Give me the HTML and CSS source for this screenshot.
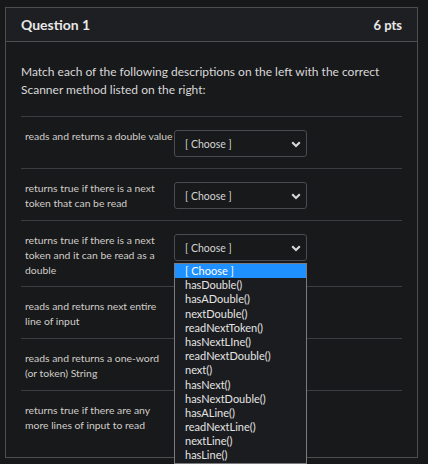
FILE: index.html
```html
<!DOCTYPE html>
<html lang="en">
<head>
    <meta charset="UTF-8">
    <title>Question 1</title>
    <link rel="stylesheet" href="styles.css">
</head>
<body>
    <div class="question">
        <div class="question-header">
            <span class="question-title">Question 1</span>
            <span class="question-points">6 pts</span>
        </div>

        <div class="question-body">
            <p class="question-text">Match each of the following descriptions on the left with the correct Scanner method listed on the right:</p>

            <div class="match-row">
                <div class="match-label nowrap">reads and returns a double value</div>
                <div class="match-select">
                    <div class="select-box">[ Choose ]<svg class="chevron" width="10" height="7" viewBox="0 0 10 7"><path d="M1.2 1.3 L5 5 L8.8 1.3" fill="none" stroke="#d6d6d6" stroke-width="2.2"/></svg></div>
                </div>
            </div>

            <div class="match-row">
                <div class="match-label">returns true if there is a next token that can be read</div>
                <div class="match-select">
                    <div class="select-box">[ Choose ]<svg class="chevron" width="10" height="7" viewBox="0 0 10 7"><path d="M1.2 1.3 L5 5 L8.8 1.3" fill="none" stroke="#d6d6d6" stroke-width="2.2"/></svg></div>
                </div>
            </div>

            <div class="match-row">
                <div class="match-label">returns true if there is a next token and it can be read as a double</div>
                <div class="match-select">
                    <div class="select-box">[ Choose ]<svg class="chevron" width="10" height="7" viewBox="0 0 10 7"><path d="M1.2 1.3 L5 5 L8.8 1.3" fill="none" stroke="#d6d6d6" stroke-width="2.2"/></svg></div>

                    <!-- open dropdown list -->
                    <div class="select-list">
                        <div class="select-option selected">[ Choose ]</div>
                        <div class="select-option">hasDouble()</div>
                        <div class="select-option">hasADouble()</div>
                        <div class="select-option">nextDouble()</div>
                        <div class="select-option">readNextToken()</div>
                        <div class="select-option">hasNextLIne()</div>
                        <div class="select-option">readNextDouble()</div>
                        <div class="select-option">next()</div>
                        <div class="select-option">hasNext()</div>
                        <div class="select-option">hasNextDouble()</div>
                        <div class="select-option">hasALine()</div>
                        <div class="select-option">readNextLine()</div>
                        <div class="select-option">nextLine()</div>
                        <div class="select-option">hasLine()</div>
                    </div>
                </div>
            </div>

            <div class="match-row">
                <div class="match-label">reads and returns next entire line of input</div>
                <div class="match-select">
                    <div class="select-box">[ Choose ]<svg class="chevron" width="10" height="7" viewBox="0 0 10 7"><path d="M1.2 1.3 L5 5 L8.8 1.3" fill="none" stroke="#d6d6d6" stroke-width="2.2"/></svg></div>
                </div>
            </div>

            <div class="match-row">
                <div class="match-label">reads and returns a one-word (or token) String</div>
                <div class="match-select">
                    <div class="select-box">[ Choose ]<svg class="chevron" width="10" height="7" viewBox="0 0 10 7"><path d="M1.2 1.3 L5 5 L8.8 1.3" fill="none" stroke="#d6d6d6" stroke-width="2.2"/></svg></div>
                </div>
            </div>

            <div class="match-row">
                <div class="match-label">returns true if there are any more lines of input to read</div>
                <div class="match-select">
                    <div class="select-box">[ Choose ]<svg class="chevron" width="10" height="7" viewBox="0 0 10 7"><path d="M1.2 1.3 L5 5 L8.8 1.3" fill="none" stroke="#d6d6d6" stroke-width="2.2"/></svg></div>
                </div>
            </div>
        </div>
    </div>
</body>
</html>
```

FILE: styles.css
```css
/* Reset */
* {
    margin: 0;
    padding: 0;
    box-sizing: border-box;
    font-family: Lato, 'Liberation Sans', Arial, sans-serif;
}

body {
    background-color: #17181a;
    color: #d2d2d2;
    width: 428px;
    height: 464px;
    overflow: hidden;
}

.question {
    margin: 7px 0 0 5px;
    width: 413px;
    height: 451px;
    border: 1px solid #4d4e50;
    background-color: #18191b;
}

.question-header {
    display: flex;
    justify-content: space-between;
    align-items: center;
    height: 34px;
    padding: 0 15px 0 15px;
    background-color: #1e1f22;
    border-bottom: 1px solid #4d4e50;
    color: #e8e8e8;
    font-weight: bold;
}

.question-title {
    font-size: 14px;
}

.question-points {
    font-size: 13px;
}

.question-body {
    padding: 21px 15px 0;
}

.question-text {
    font-size: 12px;
    line-height: 18px;
    margin-bottom: 17px;
    color: #d8d8d8;
}

.match-row {
    display: flex;
    align-items: flex-start;
    padding: 12px 0 8px;
    border-top: 1px solid #3c3d40;
}

.match-label {
    flex: 0 0 153px;
    min-width: 0;
    padding: 0 6px 0 4px;
    font-size: 10.4px;
    line-height: 15px;
    color: #d0cdc8;
}

/* single line labels may run up to the select */
.match-label.nowrap {
    white-space: nowrap;
}

.match-select {
    position: relative;
    flex: 0 0 133px;
    margin: 1px 0 3px;
}

.select-box {
    display: flex;
    justify-content: space-between;
    align-items: center;
    height: 27px;
    padding: 0 5px 0 10px;
    border: 1px solid #4a4b4e;
    border-radius: 3px;
    font-size: 10.5px;
    color: #d4d4d4;
}

.chevron {
    display: block;
    margin-top: 1px;
}

/* Open native list, drawn over the rows below */
.select-list {
    position: absolute;
    top: 29px;
    left: 0;
    width: 133px;
    border: 1px solid #7a7b7d;
    background-color: #1b1c1f;
    z-index: 10;
}

.select-option {
    height: 14.2px;
    line-height: 14.2px;
    padding-left: 10px;
    font-size: 11px;
    color: #e4e4e4;
    white-space: nowrap;
}

.select-option.selected {
    background-color: #1e90ff;
    color: #ffffff;
}
```
